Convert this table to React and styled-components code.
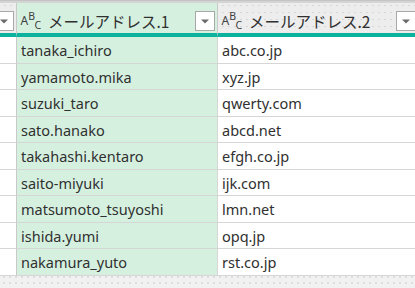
import React from "react";
import styled, { createGlobalStyle } from "styled-components";

const GlobalStyle = createGlobalStyle`
  html, body {
    margin: 0;
    padding: 0;
    background: #ffffff;
    overflow: hidden;
  }
  body {
    font-family: "Noto Sans", "Noto Sans CJK JP", sans-serif;
  }
`;

const GREEN = "#d6f0e0";
const LINE = "#d6d6d6";
const TEAL = "#0bb39f";

const Frame = styled.div`
  width: 419px;
  height: 288px;
  display: flex;
  flex-direction: column;
  overflow: hidden;
`;

const TopStrip = styled.div`
  height: 3px;
  flex: none;
  background: #d4d4d4;
  border-top: 1px solid #c4c4c4;
  box-sizing: border-box;
`;

const Grid = styled.div`
  display: grid;
  grid-template-columns: 17px 201px 201px;
  grid-auto-rows: 26.5px;
  grid-template-rows: 34px;
  flex: none;
`;

const HeadCell = styled.div`
  box-sizing: border-box;
  display: flex;
  align-items: center;
  gap: 6px;
  padding: 8px 2px 2px 3px;
  background-color: ${(p) => (p.$selected ? GREEN : "#ededed")};
  background-image: ${(p) =>
    p.$selected
      ? "none"
      : "radial-gradient(circle, #d6d6d6 0.6px, transparent 0.9px)"};
  background-size: 6px 7px;
  background-position: 2px 13px;
  border-right: 1px solid #c9c9c9;
  border-bottom: 4px solid ${TEAL};
  overflow: hidden;
  justify-content: ${(p) => (p.$edge ? "flex-end" : "flex-start")};
`;

const HeadTitle = styled.span`
  flex: 1;
  font-family: "Noto Sans CJK JP", "Noto Sans", sans-serif;
  font-size: 15.5px;
  color: #303030;
  white-space: nowrap;
  line-height: 20px;
`;

const DropBox = styled.div`
  flex: none;
  width: 20px;
  height: 20px;
  box-sizing: border-box;
  background: #ffffff;
  border: 1px solid #a8a8a8;
  display: flex;
  align-items: center;
  justify-content: center;
`;

const Cell = styled.div`
  box-sizing: border-box;
  display: flex;
  align-items: center;
  padding-left: 4px;
  padding-top: 1px;
  background: ${(p) => (p.$selected ? GREEN : "#ffffff")};
  border-right: 1px solid ${(p) => (p.$side ? "#c9c9c9" : LINE)};
  border-bottom: 1px solid ${LINE};
  font-size: 14.5px;
  color: #303030;
  white-space: nowrap;
  overflow: hidden;
`;

const Footer = styled.div`
  flex: 1;
  background-color: #f1f1f1;
  background-image: radial-gradient(circle, #d2d2d2 0.6px, transparent 0.9px);
  background-size: 6px 6px;
  background-position: 1px 4px;
`;

const Caret = () => (
  <svg width="8" height="5" viewBox="0 0 8 5">
    <path d="M0 0.5 H8 L4 4.5 Z" fill="#6b6b6b" />
  </svg>
);

const TypeIcon = () => (
  <svg
    width="22"
    height="20"
    viewBox="0 0 22 20"
    overflow="visible"
    style={{ flex: "none" }}
  >
    <g fill="#404040" fontFamily="'Noto Sans', sans-serif">
      <text x="0.4" y="14.4" fontSize="12">A</text>
      <text x="8.2" y="9.4" fontSize="10.5">B</text>
      <text x="14.6" y="17.6" fontSize="10.5">C</text>
    </g>
  </svg>
);

const rows = [
  ["tanaka_ichiro", "abc.co.jp"],
  ["yamamoto.mika", "xyz.jp"],
  ["suzuki_taro", "qwerty.com"],
  ["sato.hanako", "abcd.net"],
  ["takahashi.kentaro", "efgh.co.jp"],
  ["saito-miyuki", "ijk.com"],
  ["matsumoto_tsuyoshi", "lmn.net"],
  ["ishida.yumi", "opq.jp"],
  ["nakamura_yuto", "rst.co.jp"],
];

export default function App() {
  return (
    <>
      <GlobalStyle />
      <Frame>
        <TopStrip />
        <Grid>
          <HeadCell $edge>
            <DropBox>
              <Caret />
            </DropBox>
          </HeadCell>
          <HeadCell $selected>
            <TypeIcon />
            <HeadTitle>メールアドレス.1</HeadTitle>
            <DropBox>
              <Caret />
            </DropBox>
          </HeadCell>
          <HeadCell>
            <TypeIcon />
            <HeadTitle>メールアドレス.2</HeadTitle>
            <DropBox>
              <Caret />
            </DropBox>
          </HeadCell>
          {rows.map(([user, domain]) => (
            <React.Fragment key={user}>
              <Cell $side />
              <Cell $selected>{user}</Cell>
              <Cell>{domain}</Cell>
            </React.Fragment>
          ))}
        </Grid>
        <Footer />
      </Frame>
    </>
  );
}
